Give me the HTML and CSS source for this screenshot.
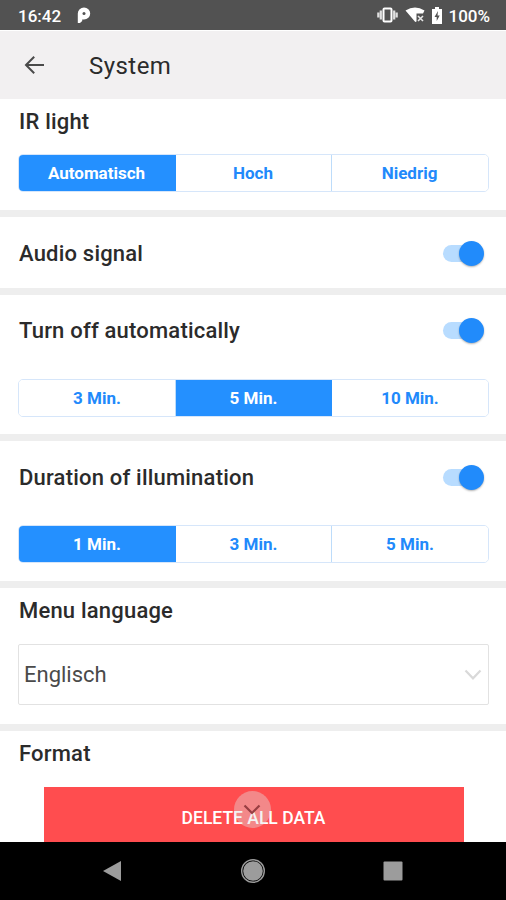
FILE: index.html
```
<!DOCTYPE html>
<html lang="en">
  <head>
    <meta charset="UTF-8" />
    <title>System</title>
    <link rel="stylesheet" href="styles.css">
  </head>
  <body>
    <div class="statusBar">
      <span class="clock">16:42</span>
      <svg class="appIcon" width="14" height="16" viewBox="0 0 14 16">
        <path d="M0.800 16V6.500a6.200 6 0 1 1 6.200 6H5.200V14L3 16z" fill="#fff" />
        <circle cx="7" cy="6.500" r="1.500" fill="#525252" />
      </svg>
      <div class="statusIcons">
        <svg width="21" height="16" viewBox="0 0 21 16">
          <path d="M1.300 5.500v5M3.800 3.500v9M17.200 3.500v9M19.700 5.500v5" stroke="#e0e0e0" stroke-width="2.200" fill="none" />
          <rect x="6.500" y="1.500" width="8" height="13" rx="1" fill="none" stroke="#fff" stroke-width="2" />
        </svg>
        <svg width="20" height="16" viewBox="0 0 20 16">
          <path d="M0.500 3.500Q10-2.500 19.500 3.500L18 6.500H11.500V14.500L10.300 15z" fill="#fff" />
          <path d="M13 9l5 5M18 9l-5 5" stroke="#e8e8e8" stroke-width="1.600" />
        </svg>
        <svg width="10" height="17" viewBox="0 0 10 17">
          <path d="M3 0h4v2h3v15H0V2h3z" fill="#fff" />
          <path d="M6 4L2.500 10h2.200v4L7.700 8.500H5.500z" fill="#525252" />
        </svg>
        <span class="battery">100%</span>
      </div>
    </div>

    <header class="toolbar">
      <svg width="20" height="18" viewBox="0 0 20 18" fill="none" stroke="#4a4a4a" stroke-width="2">
        <path d="M20 9H2M10.200 0.800L2 9l8.200 8.200" />
      </svg>
      <h1>System</h1>
    </header>

    <main>
      <section class="irLight">
        <h2>IR light</h2>
        <div class="segments">
          <button class="active">Automatisch</button>
          <button>Hoch</button>
          <button>Niedrig</button>
        </div>
      </section>

      <section class="audio">
        <div class="row">
          <h2>Audio signal</h2>
          <span class="switch"></span>
        </div>
      </section>

      <section class="turnOff">
        <div class="row">
          <h2>Turn off automatically</h2>
          <span class="switch"></span>
        </div>
        <div class="segments">
          <button>3 Min.</button>
          <button class="active">5 Min.</button>
          <button>10 Min.</button>
        </div>
      </section>

      <section class="illumination">
        <div class="row">
          <h2>Duration of illumination</h2>
          <span class="switch"></span>
        </div>
        <div class="segments">
          <button class="active">1 Min.</button>
          <button>3 Min.</button>
          <button>5 Min.</button>
        </div>
      </section>

      <section class="language">
        <h2>Menu language</h2>
        <div class="select">
          <span>Englisch</span>
          <svg width="18" height="12" viewBox="0 0 18 12" fill="none" stroke="#d9d9d9" stroke-width="2.200">
            <path d="M1.500 1.500L9 9.300l7.500-7.800" />
          </svg>
        </div>
      </section>

      <section class="format">
        <h2>Format</h2>
        <button class="deleteButton">
          DELETE ALL DATA
          <span class="scrollHint">
            <svg width="18" height="12" viewBox="0 0 18 12" fill="none" stroke="#983e42" stroke-width="2.200">
              <path d="M1.500 1.500L9 9l7.500-7.500" />
            </svg>
          </span>
        </button>
      </section>
    </main>

    <nav class="navBar">
      <svg width="20" height="22" viewBox="0 0 20 22">
        <path d="M19 1v20L1 11z" fill="#9c9c9c" />
      </svg>
      <svg width="24" height="24" viewBox="0 0 24 24">
        <circle cx="12" cy="12" r="11.300" fill="none" stroke="#9c9c9c" stroke-width="1.400" />
        <circle cx="12" cy="12" r="9.800" fill="#9c9c9c" />
      </svg>
      <svg width="20" height="20" viewBox="0 0 20 20">
        <rect x="0.500" y="0.500" width="19" height="19" rx="1" fill="#9c9c9c" />
      </svg>
    </nav>
  </body>
</html>
```

FILE: styles.css
```
* {
  box-sizing: border-box;
}

body {
  margin: 0;
  width: 506px;
  height: 900px;
  display: flex;
  flex-direction: column;
  overflow: hidden;
  background-color: #fff;
  color: #2b2b2b;
  font-family: Roboto, sans-serif;
}

h1,
h2 {
  margin: 0;
}

svg {
  display: block;
  flex: none;
}

/* Android status bar */
.statusBar {
  height: 30px;
  flex: none;
  display: flex;
  align-items: center;
  padding: 0 16px 0 18px;
  background-color: #525252;
  color: #fff;
  font-size: 17px;
  font-weight: 500;
}

.clock {
  width: 59px;
  padding-top: 1px;
}

.statusIcons {
  margin-left: auto;
  display: flex;
  align-items: center;
  gap: 7px;
}

.battery {
  padding-top: 1px;
  margin-left: -1px;
}

.toolbar {
  height: 69px;
  flex: none;
  display: flex;
  align-items: center;
  gap: 45px;
  padding-left: 24px;
  border-top: 1px solid #fff;
  background-color: #f2f0f1;
}

.toolbar h1 {
  font-size: 24px;
  font-weight: 400;
  letter-spacing: 0.45px;
  padding-top: 2px;
}

main {
  flex: 1;
  min-height: 0;
  overflow: hidden;
}

section {
  padding: 0 17px 0 18px;
  border-bottom: 7px solid #eee;
}

h2 {
  padding: 1px 0 0 1px;
  font-size: 22px;
  line-height: 26px;
  font-weight: 500;
  letter-spacing: 0.2px;
}

.irLight {
  height: 118px;
  padding-top: 9px;
}

.audio {
  height: 78px;
  padding-top: 23px;
}

.turnOff {
  height: 146px;
  padding-top: 22px;
}

.illumination {
  height: 147px;
  padding-top: 23px;
}

.language {
  height: 143px;
  padding-top: 9px;
}

.format {
  padding-top: 9px;
  border-bottom: 0;
}

.row {
  display: flex;
  align-items: center;
  justify-content: space-between;
  padding-right: 5px;
}

/* Segmented buttons */
.segments {
  height: 38px;
  margin-top: 19px;
  display: grid;
  grid-template-columns: 156px 156px 1fr;
  border: 1px solid #d6e6fa;
  border-radius: 5px;
  overflow: hidden;
}

.row + .segments {
  margin-top: 34px;
}

.turnOff .segments {
  margin-top: 35px;
}

.segments button {
  padding: 0;
  border: 0;
  background-color: #fff;
  color: #2189fb;
  font-family: inherit;
  font-size: 17px;
  font-weight: 700;
}

.segments button + button {
  border-left: 1px solid #bddcfa;
}

.segments .active {
  background-color: #2490ff;
  color: #fff;
}

.segments .active + button {
  border-left-color: #2490ff;
}

.irLight .segments button {
  padding-right: 1px;
}

.switch {
  position: relative;
  width: 41px;
  height: 26px;
}

.switch::before {
  content: "";
  position: absolute;
  left: 0;
  top: 4px;
  width: 36px;
  height: 17px;
  border-radius: 9px;
  background-color: #b8dcff;
}

.switch::after {
  content: "";
  position: absolute;
  right: 0;
  top: 0;
  width: 25px;
  height: 25px;
  border-radius: 50%;
  background-color: #218bfb;
  box-shadow: 0 1px 2px rgba(0, 0, 0, 0.3);
}

.select {
  height: 61px;
  margin-top: 20px;
  display: flex;
  align-items: center;
  justify-content: space-between;
  padding: 0 6px 0 5px;
  border: 1px solid #e2e2e2;
  border-radius: 2px;
  font-size: 22px;
  color: #4a4a4a;
}

.deleteButton {
  position: relative;
  display: block;
  width: 420px;
  height: 62px;
  margin: 20px auto 0;
  padding: 0;
  border: 0;
  background-color: #ff4d4f;
  color: #fff;
  font-family: inherit;
  font-size: 17.5px;
  font-weight: 500;
}

/* Translucent bubble over the button */
.scrollHint {
  position: absolute;
  left: 190px;
  top: 4px;
  width: 37px;
  height: 37px;
  display: flex;
  align-items: center;
  justify-content: center;
  border-radius: 50%;
  background-color: rgba(225, 225, 225, 0.4);
}

.navBar {
  height: 58px;
  flex: none;
  display: flex;
  align-items: center;
  justify-content: space-between;
  padding: 0 103px 0 102px;
  background-color: #000;
}
```
